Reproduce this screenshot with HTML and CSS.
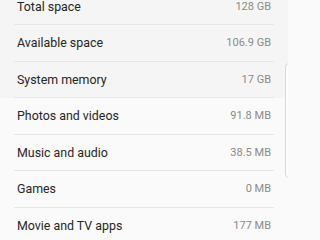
FILE: index.html
```html
<!DOCTYPE html>
<html>
<head>
<meta charset="utf-8">
<link rel="stylesheet" href="styles.css">
</head>
<body>
<div class="screen">
  <div class="list">
    <div class="group top">
      <div class="row"><span class="label">Total space</span><span class="value">128 GB</span></div>
      <div class="row"><span class="label">Available space</span><span class="value">106.9 GB</span></div>
      <div class="row"><span class="label">System memory</span><span class="value">17 GB</span></div>
    </div>
    <div class="group bottom">
      <div class="row"><span class="label">Photos and videos</span><span class="value">91.8 MB</span></div>
      <div class="row"><span class="label">Music and audio</span><span class="value">38.5 MB</span></div>
      <div class="row"><span class="label">Games</span><span class="value">0 MB</span></div>
      <div class="row"><span class="label">Movie and TV apps</span><span class="value">177 MB</span></div>
    </div>
  </div>
  <div class="scrollbar"></div>
</div>
</body>
</html>
```
FILE: styles.css
```css
html, body {
  margin: 0;
  padding: 0;
  background: #fafafa;
}
.screen {
  position: relative;
  width: 288px;
  height: 238px;
  overflow: hidden;
  font-family: Roboto, "Liberation Sans", sans-serif;
}
.list {
  margin-top: -11.5px;
}
.group.top {
  background: #f5f5f5;
}
.group.bottom {
  background: #fafafa;
}
.row {
  height: 36.5px;
  box-sizing: border-box;
  margin: 0 14px;
  padding: 0 3px 0 3px;
  display: flex;
  align-items: center;
  justify-content: space-between;
  border-bottom: 1px solid #e6e6e6;
}
.label {
  font-size: 12.4px;
  color: #262626;
}
.value {
  font-size: 11px;
  color: #8a8a8a;
}
.scrollbar {
  position: absolute;
  left: 285px;
  top: 63px;
  width: 8px;
  height: 115px;
  border: 1px solid #d8d8d8;
  border-radius: 4px;
  background: #fdfdfd;
  box-sizing: border-box;
}
```
